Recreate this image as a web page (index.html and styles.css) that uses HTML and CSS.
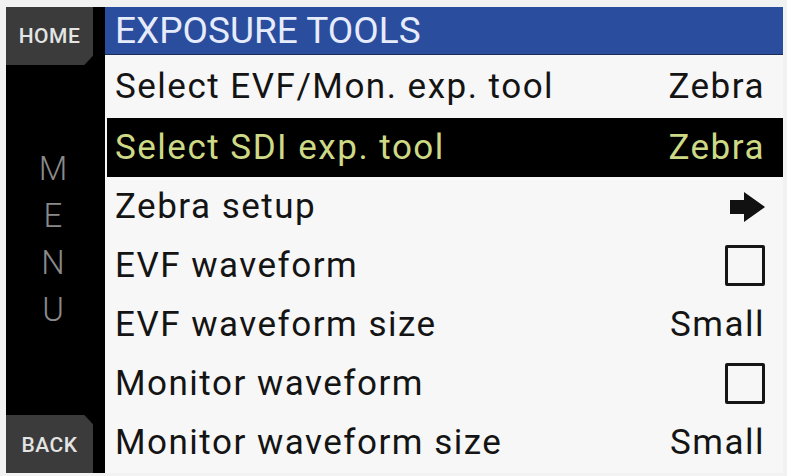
FILE: index.html
```html
<!DOCTYPE html>
<html lang="en">
<head>
    <meta charset="UTF-8">
    <meta name="viewport" content="width=device-width, initial-scale=1.0">
    <title>Exposure Tools</title>
    <link rel="stylesheet" href="styles.css">
</head>
<body>
    <div class="screen">
        <div class="side">
            <div class="tab tab-home">HOME</div>
            <div class="side-label">
                <span>M</span>
                <span>E</span>
                <span>N</span>
                <span>U</span>
            </div>
            <div class="tab tab-back">BACK</div>
        </div>

        <div class="main">
            <div class="title">EXPOSURE TOOLS</div>

            <div class="row row-first">
                <span class="name">Select EVF/Mon. exp. tool</span>
                <span class="value">Zebra</span>
            </div>
            <div class="row selected">
                <span class="name">Select SDI exp. tool</span>
                <span class="value">Zebra</span>
            </div>
            <div class="row">
                <span class="name">Zebra setup</span>
                <span class="value">
                    <svg class="arrow" width="36" height="30" viewBox="0 0 36 30">
                        <path d="M0 8 H14 V0 L35 15 L14 30 V22 H0 Z" fill="#111"/>
                    </svg>
                </span>
            </div>
            <div class="row">
                <span class="name">EVF waveform</span>
                <span class="value"><span class="check"></span></span>
            </div>
            <div class="row">
                <span class="name">EVF waveform size</span>
                <span class="value">Small</span>
            </div>
            <div class="row">
                <span class="name">Monitor waveform</span>
                <span class="value"><span class="check"></span></span>
            </div>
            <div class="row">
                <span class="name">Monitor waveform size</span>
                <span class="value">Small</span>
            </div>
        </div>
    </div>
</body>
</html>
```

FILE: styles.css
```css
html, body {
    margin: 0;
    height: 100%;
}
body {
    background-color: #f2f2f2;
    padding: 7px 4px 3px 6px;
    box-sizing: border-box;
    font-family: Roboto, "DejaVu Sans", sans-serif;
}
.screen {
    display: flex;
    height: 466px;
    background-color: #000;
}

/* left strip with HOME / MENU / BACK */
.side {
    width: 99px;
    display: flex;
    flex-direction: column;
    flex-shrink: 0;
}
.tab {
    width: 87px;
    background-color: #3b3b3b;
    color: #e4e4e4;
    font-size: 21px;
    font-weight: 500;
    letter-spacing: 0.5px;
    display: flex;
    align-items: center;
    justify-content: center;
}
.tab-home {
    height: 58px;
    clip-path: polygon(0 0, 100% 0, 100% 84%, 90% 100%, 0 100%);
}
.tab-back {
    height: 56px;
    margin-top: auto;
    padding-top: 2px;
    clip-path: polygon(0 0, 90% 0, 100% 16%, 100% 100%, 0 100%);
}
.side-label {
    margin-top: 80px;
    display: flex;
    flex-direction: column;
    align-items: center;
    padding-right: 5px;
    color: #8a8a8a;
    font-size: 33px;
    font-weight: 300;
    line-height: 47px;
}

/* menu list */
.main {
    flex: 1;
    display: flex;
    flex-direction: column;
    background-color: #f7f7f7;
}
.title {
    height: 47px;
    background-color: #2b4d9e;
    color: #e6ecfb;
    font-size: 37px;
    line-height: 47px;
    padding-left: 10px;
    border-bottom: 1px solid #1c2c55;
}
.row {
    height: 59px;
    display: flex;
    align-items: center;
    justify-content: space-between;
    padding: 0 18px 0 10px;
    font-size: 35px;
    letter-spacing: 1.5px;
    color: #141414;
}
.row-first {
    height: 63px;
}
.row.selected {
    background-color: #000;
    color: #cdd985;
    margin-left: 2px;
    padding-left: 8px;
}
.value {
    display: flex;
    align-items: center;
}
.arrow {
    margin-right: -1px;
}
.check {
    width: 34px;
    height: 35px;
    border: 3px solid #151515;
    border-radius: 2px;
}
```
